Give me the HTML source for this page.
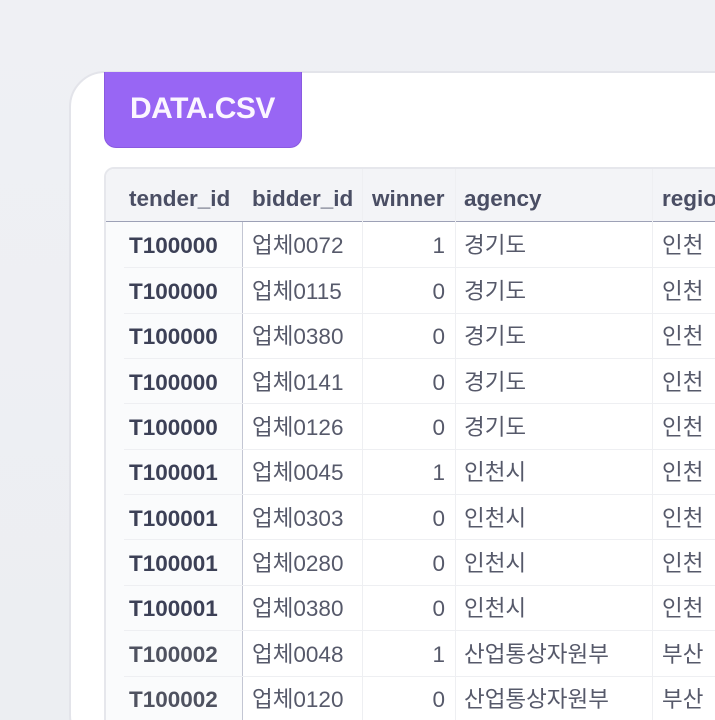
<!DOCTYPE html>
<html><head><meta charset="utf-8"><style>
*{margin:0;padding:0;box-sizing:border-box}
html,body{width:715px;height:720px;overflow:hidden}
body{background:linear-gradient(180deg,#eff0f4,#eceef2);font-family:"Liberation Sans","Noto Sans CJK KR",sans-serif;position:relative}
.card{position:absolute;left:69px;top:71px;width:700px;height:680px;background:#fff;border:2px solid #e3e4ea;border-radius:36px}
.tab{position:absolute;left:104px;top:72px;width:198px;height:76px;background:#9866f4;border:1px solid #8a5ae0;border-top:none;border-radius:0 0 12px 12px;color:#fbf6ff;font-weight:bold;font-size:30px;letter-spacing:-0.5px;padding:20px 0 0 25px}
.tbl{position:absolute;left:104px;top:167px;width:640px;height:600px;border:2px solid #e6e7ec;border-radius:10px;overflow:hidden;background:#fff}
.hdr{position:absolute;left:0;top:0;width:100%;height:53px;background:#f3f4f7;border-bottom:1.5px solid #9da1b6}
.c0{position:absolute;left:0;top:53px;width:137px;height:600px;background:#fafbfc;border-right:1.5px solid #c3c6d3}
.t{position:absolute;font-size:22.5px;white-space:nowrap;line-height:26px}
.h{font-weight:bold;color:#4a4e64;top:17px}
.id{font-weight:bold;color:#3c4056}
.v{color:#56596a}
.k{margin-top:0}
.n{width:60px;text-align:right}
.line{position:absolute;left:18px;width:640px;height:1px;background:#eeeff2}
.vl{position:absolute;top:0;width:1px;height:600px;background:#eeeff2}
</style></head><body>
<div class="card"></div>
<div class="tab">DATA.CSV</div>
<div class="tbl">
<div class="hdr"></div>
<div class="c0"></div>
<div class="vl" style="left:256px"></div>
<div class="vl" style="left:349px"></div>
<div class="vl" style="left:546px"></div>
<div class="t h" style="left:23px">tender_id</div>
<div class="t h" style="left:146px">bidder_id</div>
<div class="t h" style="left:266px">winner</div>
<div class="t h" style="left:358px">agency</div>
<div class="t h" style="left:556px">regio</div>

<div class="line" style="top:98px"></div><div class="line" style="top:144px"></div><div class="line" style="top:189px"></div><div class="line" style="top:234px"></div><div class="line" style="top:280px"></div><div class="line" style="top:325px"></div><div class="line" style="top:370px"></div><div class="line" style="top:416px"></div><div class="line" style="top:461px"></div><div class="line" style="top:507px"></div>

<div class="t id" style="left:23px;top:64px">T100000</div><div class="t v k" style="left:146px;top:64px">업체0072</div><div class="t v n" style="left:279px;top:64px">1</div><div class="t v k" style="left:358px;top:64px">경기도</div><div class="t v k" style="left:556px;top:64px">인천</div>
<div class="t id" style="left:23px;top:110px">T100000</div><div class="t v k" style="left:146px;top:110px">업체0115</div><div class="t v n" style="left:279px;top:110px">0</div><div class="t v k" style="left:358px;top:110px">경기도</div><div class="t v k" style="left:556px;top:110px">인천</div>
<div class="t id" style="left:23px;top:155px">T100000</div><div class="t v k" style="left:146px;top:155px">업체0380</div><div class="t v n" style="left:279px;top:155px">0</div><div class="t v k" style="left:358px;top:155px">경기도</div><div class="t v k" style="left:556px;top:155px">인천</div>
<div class="t id" style="left:23px;top:201px">T100000</div><div class="t v k" style="left:146px;top:201px">업체0141</div><div class="t v n" style="left:279px;top:201px">0</div><div class="t v k" style="left:358px;top:201px">경기도</div><div class="t v k" style="left:556px;top:201px">인천</div>
<div class="t id" style="left:23px;top:246px">T100000</div><div class="t v k" style="left:146px;top:246px">업체0126</div><div class="t v n" style="left:279px;top:246px">0</div><div class="t v k" style="left:358px;top:246px">경기도</div><div class="t v k" style="left:556px;top:246px">인천</div>
<div class="t id" style="left:23px;top:291px">T100001</div><div class="t v k" style="left:146px;top:291px">업체0045</div><div class="t v n" style="left:279px;top:291px">1</div><div class="t v k" style="left:358px;top:291px">인천시</div><div class="t v k" style="left:556px;top:291px">인천</div>
<div class="t id" style="left:23px;top:337px">T100001</div><div class="t v k" style="left:146px;top:337px">업체0303</div><div class="t v n" style="left:279px;top:337px">0</div><div class="t v k" style="left:358px;top:337px">인천시</div><div class="t v k" style="left:556px;top:337px">인천</div>
<div class="t id" style="left:23px;top:382px">T100001</div><div class="t v k" style="left:146px;top:382px">업체0280</div><div class="t v n" style="left:279px;top:382px">0</div><div class="t v k" style="left:358px;top:382px">인천시</div><div class="t v k" style="left:556px;top:382px">인천</div>
<div class="t id" style="left:23px;top:427px">T100001</div><div class="t v k" style="left:146px;top:427px">업체0380</div><div class="t v n" style="left:279px;top:427px">0</div><div class="t v k" style="left:358px;top:427px">인천시</div><div class="t v k" style="left:556px;top:427px">인천</div>
<div class="t id" style="left:23px;top:473px;color:#4f5260">T100002</div><div class="t v k" style="left:146px;top:473px">업체0048</div><div class="t v n" style="left:279px;top:473px">1</div><div class="t v k" style="left:358px;top:473px">산업통상자원부</div><div class="t v k" style="left:556px;top:473px">부산</div>
<div class="t id" style="left:23px;top:518px;color:#4f5260">T100002</div><div class="t v k" style="left:146px;top:518px">업체0120</div><div class="t v n" style="left:279px;top:518px">0</div><div class="t v k" style="left:358px;top:518px">산업통상자원부</div><div class="t v k" style="left:556px;top:518px">부산</div>
</div>
</body></html>
